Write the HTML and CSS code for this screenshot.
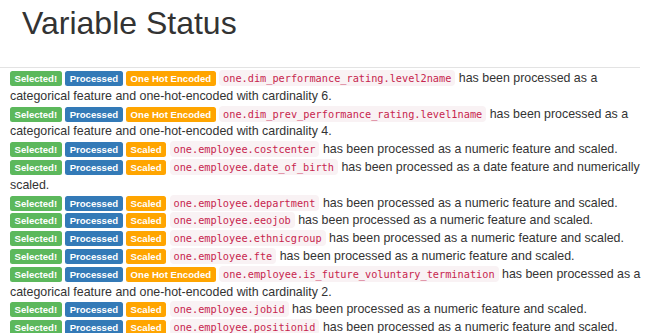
FILE: index.html
```html
<!DOCTYPE html>
<html lang="en">
<head>
  <meta charset="UTF-8">
  <title>Variable Status</title>
  <link rel="stylesheet" href="styles.css">
</head>
<body>
  <h1 class="title">Variable Status</h1>
  <div class="output">
    <div class="row"><span class="label selected">Selected!</span> <span class="label processed">Processed</span> <span class="label onehot">One Hot Encoded</span> <code>one.dim_performance_rating.level2name</code> has been processed as a categorical feature and one-hot-encoded with cardinality 6.</div>
    <div class="row"><span class="label selected">Selected!</span> <span class="label processed">Processed</span> <span class="label onehot">One Hot Encoded</span> <code>one.dim_prev_performance_rating.level1name</code> has been processed as a categorical feature and one-hot-encoded with cardinality 4.</div>
    <div class="row"><span class="label selected">Selected!</span> <span class="label processed">Processed</span> <span class="label scaled">Scaled</span> <code>one.employee.costcenter</code> has been processed as a numeric feature and scaled.</div>
    <div class="row"><span class="label selected">Selected!</span> <span class="label processed">Processed</span> <span class="label scaled">Scaled</span> <code>one.employee.date_of_birth</code> has been processed as a date feature and numerically scaled.</div>
    <div class="row"><span class="label selected">Selected!</span> <span class="label processed">Processed</span> <span class="label scaled">Scaled</span> <code>one.employee.department</code> has been processed as a numeric feature and scaled.</div>
    <div class="row"><span class="label selected">Selected!</span> <span class="label processed">Processed</span> <span class="label scaled">Scaled</span> <code>one.employee.eeojob</code> has been processed as a numeric feature and scaled.</div>
    <div class="row"><span class="label selected">Selected!</span> <span class="label processed">Processed</span> <span class="label scaled">Scaled</span> <code>one.employee.ethnicgroup</code> has been processed as a numeric feature and scaled.</div>
    <div class="row"><span class="label selected">Selected!</span> <span class="label processed">Processed</span> <span class="label scaled">Scaled</span> <code>one.employee.fte</code> has been processed as a numeric feature and scaled.</div>
    <div class="row"><span class="label selected">Selected!</span> <span class="label processed">Processed</span> <span class="label onehot">One Hot Encoded</span> <code>one.employee.is_future_voluntary_termination</code> has been processed as a categorical feature and one-hot-encoded with cardinality 2.</div>
    <div class="row"><span class="label selected">Selected!</span> <span class="label processed">Processed</span> <span class="label scaled">Scaled</span> <code>one.employee.jobid</code> has been processed as a numeric feature and scaled.</div>
    <div class="row"><span class="label selected">Selected!</span> <span class="label processed">Processed</span> <span class="label scaled">Scaled</span> <code>one.employee.positionid</code> has been processed as a numeric feature and scaled.</div>
  </div>
</body>
</html>
```

FILE: styles.css
```css
body { margin: 0; font-family: "Liberation Sans", Arial, sans-serif; color: #333; }
.title { font-size: 32px; font-weight: normal; line-height: 37px; margin: 5px 0 25px 22px; }
.output { border-top: 1px solid #e3e3e3; margin-right: 10px; padding: 2px 0 0 10px; font-size: 12.4px; line-height: 17.8px; }
.row { margin-right: -6px; }
.label { padding: 2px 4.5px; font-size: 9.6px; font-weight: bold; line-height: 1; color: #fff; border-radius: 2.5px; white-space: nowrap; }
.selected { background-color: #5cb85c; }
.processed { background-color: #337ab7; }
.onehot, .scaled { background-color: #ffa500; }
code { font-family: "DejaVu Sans Mono", "Liberation Mono", monospace; font-size: 10.25px; line-height: 1; padding: 2px 4px; color: #c7254e; background-color: #f9f2f4; border-radius: 4px; }
```
